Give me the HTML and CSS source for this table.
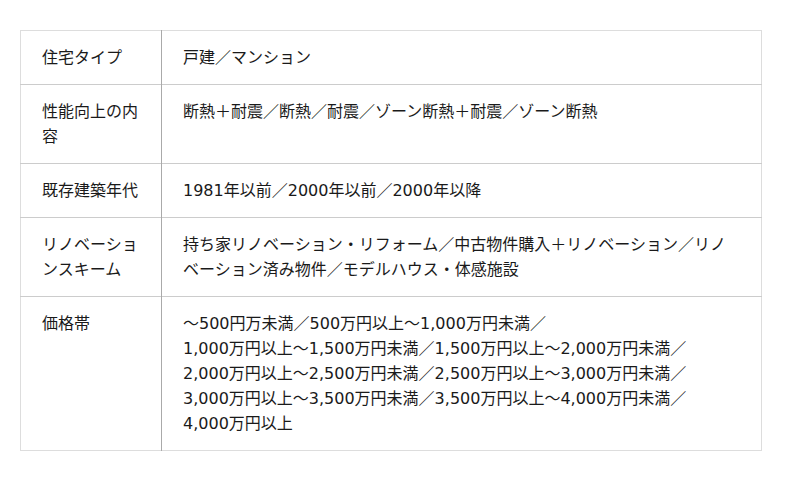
FILE: index.html
```html
<!DOCTYPE html>
<html lang="ja">
<head>
<meta charset="utf-8">
<link rel="stylesheet" href="styles.css">
</head>
<body>
<table class="spec">
  <tr>
    <th class="label">住宅タイプ</th>
    <td class="value">戸建／マンション</td>
  </tr>
  <tr>
    <th class="label">性能向上の内容</th>
    <td class="value">断熱＋耐震／断熱／耐震／ゾーン断熱＋耐震／ゾーン断熱</td>
  </tr>
  <tr>
    <th class="label">既存建築年代</th>
    <td class="value">1981年以前／2000年以前／2000年以降</td>
  </tr>
  <tr>
    <th class="label">リノベーションスキーム</th>
    <td class="value">持ち家リノベーション・リフォーム／中古物件購入＋リノベーション／リノベーション済み物件／モデルハウス・体感施設</td>
  </tr>
  <tr>
    <th class="label">価格帯</th>
    <td class="value">～500円万未満／500万円以上～1,000万円未満／<br>1,000万円以上～1,500万円未満／1,500万円以上～2,000万円未満／<br>2,000万円以上～2,500万円未満／2,500万円以上～3,000万円未満／<br>3,000万円以上～3,500万円未満／3,500万円以上～4,000万円未満／<br>4,000万円以上</td>
  </tr>
</table>
</body>
</html>
```

FILE: styles.css
```css
html, body {
  margin: 0;
  padding: 0;
  background: #fff;
}
body {
  padding: 30px 20px;
  font-family: "DejaVu Sans", "Noto Sans CJK JP", sans-serif;
  font-size: 16px;
  color: #1a1a1a;
}
.spec {
  width: 742px;
  border-collapse: collapse;
  border: 1px solid #ddd;
}
.spec tr {
  border-bottom: 1px solid #ccc;
}
.spec tr:last-child {
  border-bottom: 1px solid #ddd;
}
.label, .value {
  padding: 14px 20px 14px 21px;
  line-height: 25px;
  text-align: left;
  vertical-align: top;
  font-weight: normal;
}
.label {
  width: 99px;
  border-right: 1px solid #aaa;
}
```
